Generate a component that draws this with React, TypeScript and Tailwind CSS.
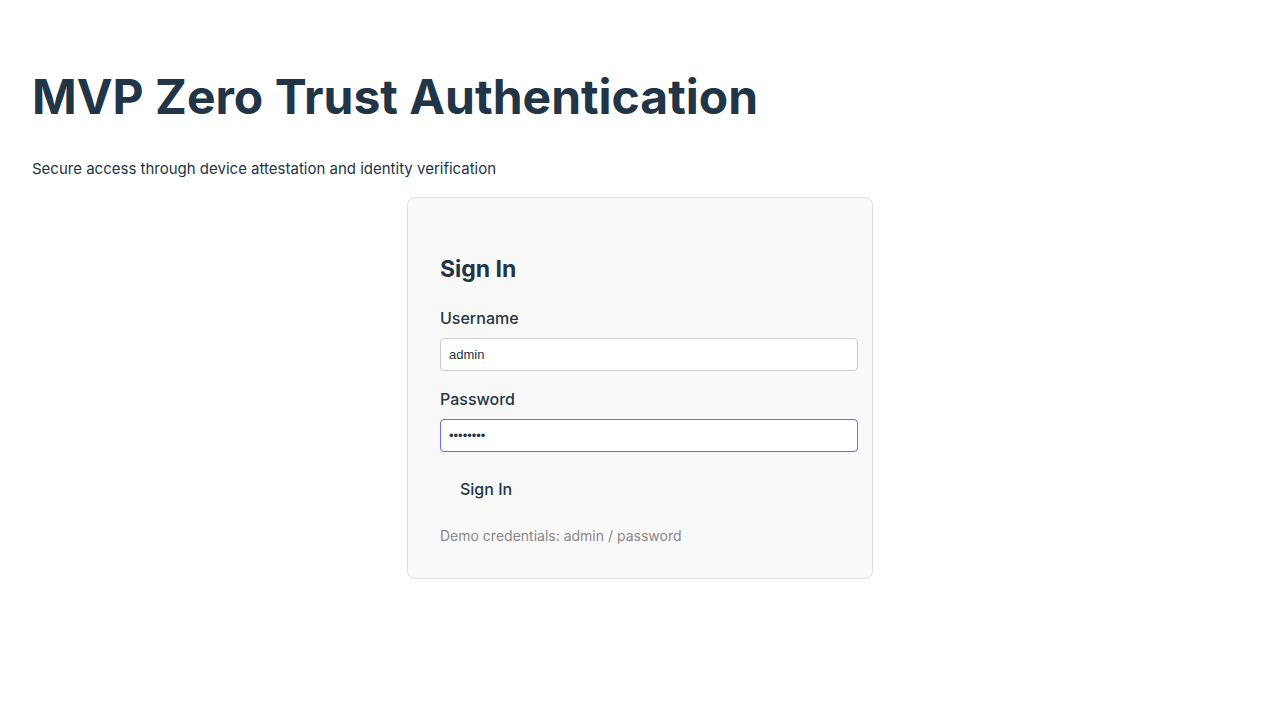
import { useState } from "react";

export default function App() {
  const [username, setUsername] = useState("admin");
  const [password, setPassword] = useState("password");

  return (
    <main className="min-h-screen bg-white p-8 font-['Inter','Liberation_Sans',sans-serif] text-base leading-6 text-[#213547]">
      <h1 className="mt-9 text-5xl leading-[57px] font-bold">MVP Zero Trust Authentication</h1>
      <p className="mt-8 text-[15px] leading-6">Secure access through device attestation and identity verification</p>
      <section className="mx-auto mt-4 w-full max-w-[466px] rounded-lg border border-[#dddddd] bg-[#f9f9f9] p-8">
        <h2 className="mt-5 text-[23px] leading-[38px] font-bold">Sign In</h2>
        <form className="mt-[18px]" onSubmit={(event) => event.preventDefault()}>
          <label htmlFor="username" className="block font-medium">Username</label>
          <input
            id="username"
            type="text"
            value={username}
            onChange={(event) => setUsername(event.target.value)}
            className="mt-2 block h-[33px] w-[418px] rounded-[4px] border border-[#cccccc] bg-white px-2 font-['Liberation_Sans',sans-serif] text-[13px] outline-none"
          />
          <label htmlFor="password" className="mt-4 block font-medium">Password</label>
          <input
            id="password"
            type="password"
            value={password}
            onChange={(event) => setPassword(event.target.value)}
            className="mt-2 block h-[33px] w-[418px] rounded-[4px] border border-[#646cff] bg-white px-2 font-['Liberation_Sans',sans-serif] text-[13px] outline-none"
          />
          <button type="submit" className="mt-4 block rounded-lg px-5 py-[9px] font-medium">Sign In</button>
        </form>
        <p className="mt-4 text-sm leading-5 text-[#888888]">Demo credentials: admin / password</p>
      </section>
    </main>
  );
}
